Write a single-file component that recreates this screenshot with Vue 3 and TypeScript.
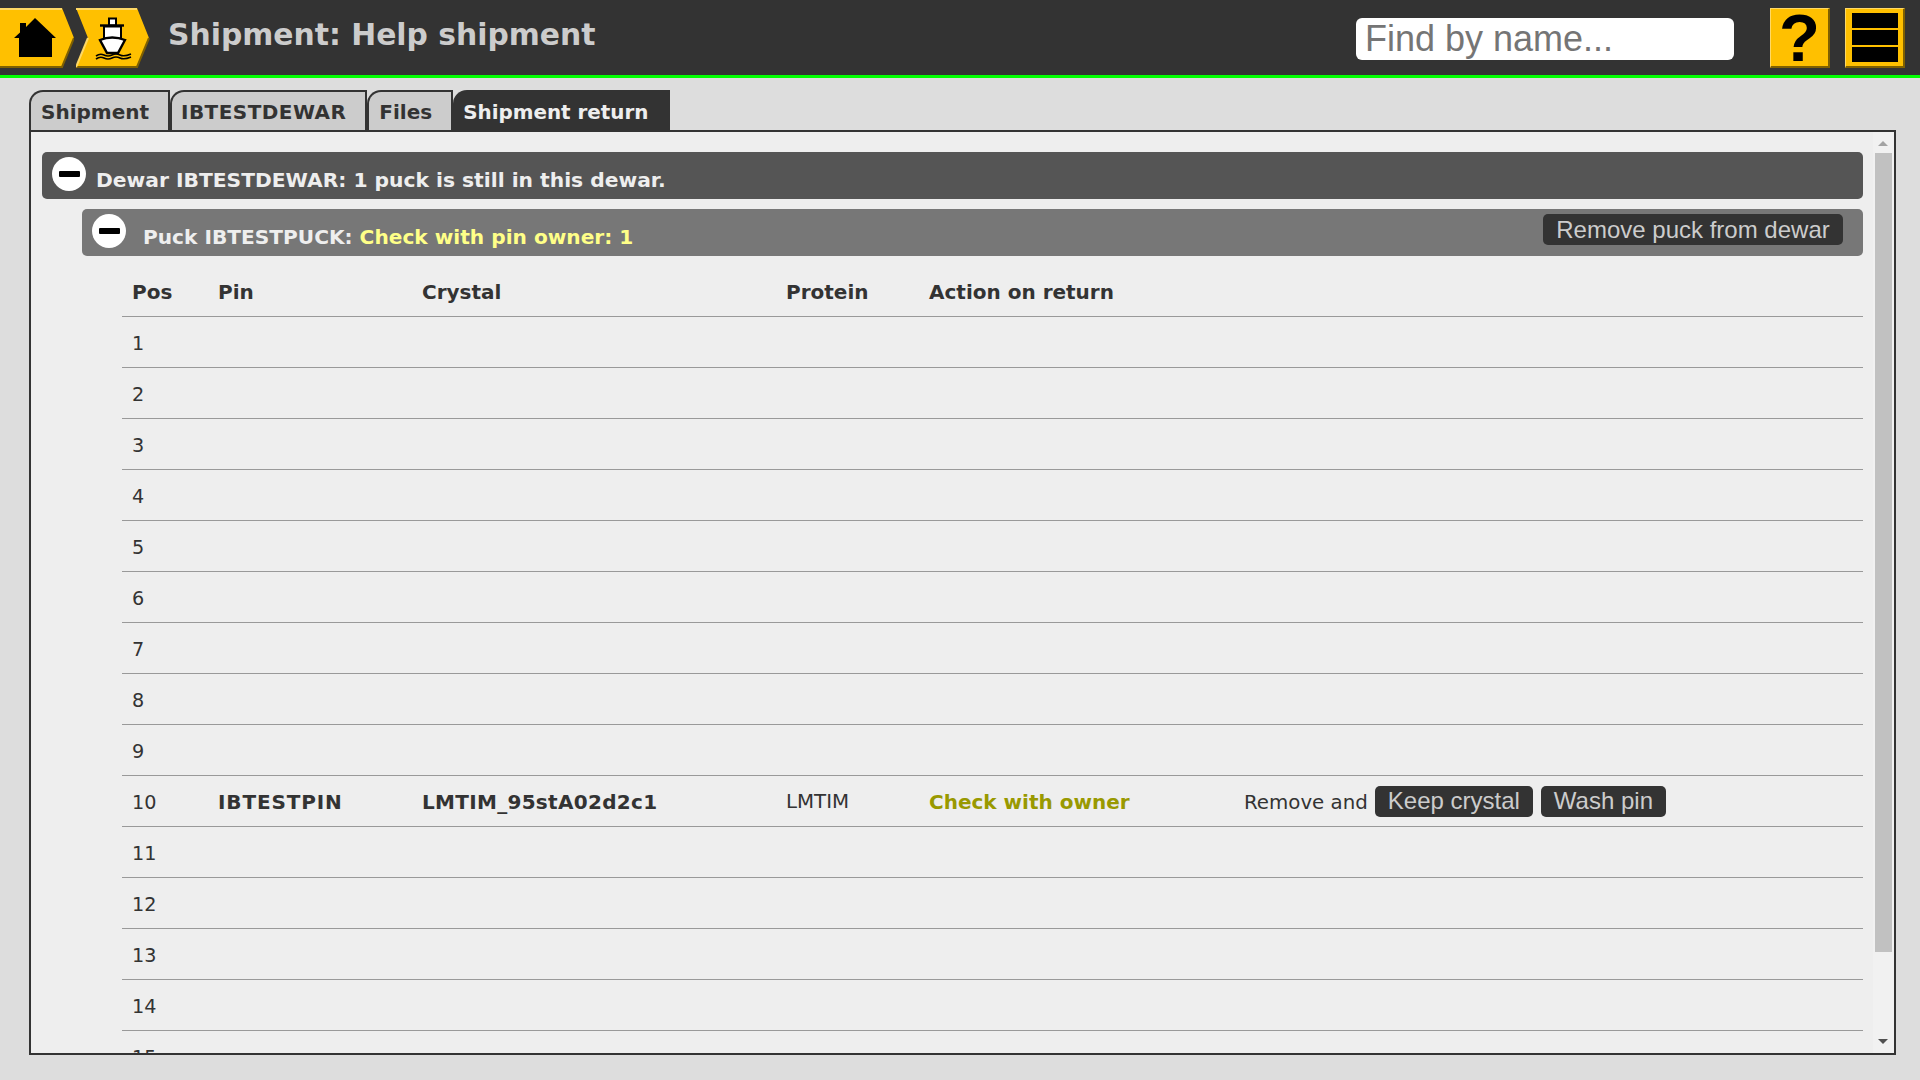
<script setup lang="ts">
const tabs = ['Shipment', 'IBTESTDEWAR', 'Files', 'Shipment return']
const positions: number[] = Array.from({ length: 15 }, (_, i) => i + 1)
</script>

<template>
  <div class="page">
    <header class="topbar">
      <button class="arrow home" aria-label="Home">
        <svg width="74" height="60" viewBox="0 0 74 60">
          <polygon points="0,0 62,0 74,30 62,60 0,60" fill="#ffc000" />
          <polyline points="0,1 62,1" fill="none" stroke="#ffd966" stroke-width="2" />
          <polyline points="0,59 62,59 74,30" fill="none" stroke="#7f6000" stroke-width="2" />
          <path d="M14 30 L20 24.5 V15 H26 V19 L35 10 L56 30 H52 V49 H19 V30 Z" fill="#000" />
        </svg>
      </button>
      <button class="arrow ship" aria-label="Shipments">
        <svg width="74" height="60" viewBox="0 0 74 60">
          <polygon points="0,0 61,0 73,30 61,60 0,60 12,30" fill="#ffc000" />
          <polyline points="0,1 61,1" fill="none" stroke="#ffd966" stroke-width="2" />
          <polyline points="0,59 61,59 73,30" fill="none" stroke="#7f6000" stroke-width="2" />
          <polyline points="0,59 12,30" fill="none" stroke="#ffd966" stroke-width="2" />
          <rect x="33" y="10.5" width="7" height="7" fill="#fff" stroke="#000" stroke-width="2" />
          <path d="M24 17.5 H48" stroke="#000" stroke-width="2.4" />
          <rect x="28" y="18.5" width="17" height="12" fill="#fff" stroke="#000" stroke-width="2" />
          <path d="M24 32 Q36 27 49 32 L42 45 H31 Z" fill="#fff" stroke="#000" stroke-width="2.4" />
          <path d="M20 48 Q24 45 28 47 T36 47 T44 47 T55 46 M20 51 Q24 48 28 50 T36 50 T44 50 T55 49" fill="none" stroke="#000" stroke-width="1.6" />
        </svg>
      </button>
      <h1 class="title">Shipment: Help shipment</h1>
      <input class="search" type="text" placeholder="Find by name..." />
      <button class="square help" aria-label="Help">
        <span class="qmark">?</span>
      </button>
      <button class="square menu" aria-label="Menu">
        <i></i><i></i><i></i>
      </button>
    </header>

    <main class="content">
      <nav class="tabs">
        <span v-for="(t, i) in tabs" :key="t" class="tab" :class="{ active: i === tabs.length - 1 }">{{ t }}</span>
      </nav>
      <section class="panel">
        <div class="scroller">
          <div class="bar dewar">
            <span class="toggle"><i></i></span>
            <span class="bar-text dewar-text">Dewar IBTESTDEWAR: 1 puck is still in this dewar.</span>
          </div>
          <div class="bar puck">
            <span class="toggle"><i></i></span>
            <span class="bar-text puck-text">Puck IBTESTPUCK: <span class="warn">Check with pin owner: 1</span></span>
            <button class="btn remove">Remove puck from dewar</button>
          </div>
          <table class="pins">
            <colgroup>
              <col class="c-pos" />
              <col class="c-pin" />
              <col class="c-crystal" />
              <col class="c-protein" />
              <col class="c-action" />
              <col />
            </colgroup>
            <thead>
              <tr>
                <th>Pos</th><th>Pin</th><th>Crystal</th><th>Protein</th><th>Action on return</th><th></th>
              </tr>
            </thead>
            <tbody>
              <tr v-for="p in positions" :key="p">
                <td class="num">{{ p }}</td>
                <template v-if="p === 10">
                  <td class="strong pin-name">IBTESTPIN</td>
                  <td class="strong crystal-name">LMTIM_95stA02d2c1</td>
                  <td class="wide">LMTIM</td>
                  <td class="owner">Check with owner</td>
                  <td class="actions">
                    <span class="wide">Remove and</span>
                    <button class="btn">Keep crystal</button>
                    <button class="btn">Wash pin</button>
                  </td>
                </template>
                <template v-else>
                  <td></td><td></td><td></td><td></td><td></td>
                </template>
              </tr>
            </tbody>
          </table>
        </div>
        <div class="scrollbar" aria-hidden="true">
          <span class="tri up"></span>
          <span class="thumb"></span>
          <span class="tri down"></span>
        </div>
      </section>
    </main>
  </div>
</template>

<style>
html, body { margin: 0; background: #ddd; }
</style>

<style scoped>
.page {
  width: 1920px;
  height: 1080px;
  overflow: hidden;
  background: #ddd;
  font-family: "DejaVu Sans", Verdana, sans-serif;
  color: #333;
}
.topbar {
  height: 75px;
  border-bottom: 3px solid #0f0;
  background: #333;
  display: flex;
  align-items: center;
  padding: 0 15px 0 0;
}
.arrow, .square {
  border: 0;
  padding: 0;
  background: none;
  display: block;
  height: 60px;
  margin-top: 1px;
}
.arrow svg { display: block; }
.arrow.home { width: 74px; }
.arrow.ship { width: 74px; margin-left: 2px; }
.title {
  margin: 0 0 0 18px;
  font-size: 29.8px;
  font-weight: 700;
  color: #ccc;
  flex: 1;
  position: relative;
  top: -3px;
}
.search {
  width: 378px;
  height: 42px;
  box-sizing: border-box;
  border: 0;
  border-radius: 6px;
  background: #fff;
  padding: 0 9px;
  font-family: "Liberation Sans", Arial, sans-serif;
  font-size: 36px;
  margin-right: 36px;
  outline: none;
  margin-top: 3px;
}
.search::placeholder { color: #757575; opacity: 1; }
.square {
  width: 60px;
  box-sizing: border-box;
  background: #ffc000;
  border-top: 1px solid #ffd966;
  border-left: 1px solid #ffd966;
  border-right: 2px solid #7f6000;
  border-bottom: 2px solid #7f6000;
}
.help {
  margin-right: 15px;
  display: flex;
  align-items: center;
  justify-content: center;
}
.qmark {
  font-family: "Liberation Sans", Arial, sans-serif;
  font-weight: 700;
  font-size: 67px;
  line-height: 60px;
  color: #000;
}
.menu {
  display: flex;
  flex-direction: column;
  gap: 2px;
  padding: 4px 5px 4px 6px;
}
.menu i {
  display: block;
  flex: 1;
  background: #000;
}
.content {
  padding: 12px 24px 0 29px;
}
.tabs {
  display: flex;
  height: 40px;
}
.tab {
  box-sizing: border-box;
  height: 40px;
  padding: 2px 19px 0 9px;
  display: flex;
  align-items: center;
  background: #ccc;
  color: #333;
  font-weight: 700;
  font-size: 20px;
  border: 2px solid #333;
  border-bottom: 0;
  border-top-left-radius: 14px;
}
.tab:nth-child(1) { padding: 2px 19px 0 10px; }
.tab:nth-child(2) { letter-spacing: 0.45px; }
.tab:nth-child(3) { padding: 2px 19px 0 10px; }
.tab.active {
  background: #333;
  color: #eee;
  font-size: 19.9px;
  padding: 2px 20px 0 8px;
}
.panel {
  box-sizing: border-box;
  height: 925px;
  border: 2px solid #333;
  background: #eee;
  display: flex;
}
.scroller {
  flex: 1;
  min-width: 0;
  overflow: hidden;
  padding: 20px 10px 0 11px;
}
.bar {
  height: 47px;
  border-radius: 5px;
  display: flex;
  align-items: center;
  position: relative;
}
.dewar { background: #555; }
.puck { background: #777; margin: 10px 0 0 40px; }
.toggle {
  width: 34px;
  height: 34px;
  margin-left: 10px;
  border-radius: 50%;
  background: #fff;
  display: flex;
  align-items: center;
  justify-content: center;
  align-self: flex-start;
  margin-top: 5px;
}
.toggle i {
  display: block;
  width: 21px;
  height: 6px;
  background: #000;
  border-radius: 1px;
}
.bar-text {
  font-weight: 700;
  font-size: 20.25px;
  color: #eee;
  margin-top: 8px;
}
.dewar-text { margin-left: 10px; }
.puck-text { margin-left: 17px; font-size: 20.15px; }
.warn { color: #ff8; }
.btn {
  border: 0;
  border-radius: 5px;
  background: #333;
  color: #ccc;
  font-family: "Liberation Sans", Arial, sans-serif;
  font-size: 24px;
  height: 31px;
  line-height: 29px;
  padding: 0 0 2px;
  width: auto;
}
.actions .btn { padding: 0 13px 2px; }
.remove {
  margin-left: auto;
  margin-right: 20px;
  width: 300px;
  align-self: flex-start;
  margin-top: 5px;
  padding: 0;
}
.pins {
  width: 1741px;
  margin: 10px 0 0 80px;
  table-layout: fixed;
  border-collapse: separate;
  border-spacing: 0;
  font-size: 19.2px;
}
.c-pos { width: 86px; }
.c-pin { width: 204px; }
.c-crystal { width: 364px; }
.c-protein { width: 143px; }
.c-action { width: 315px; }
.pins th, .pins td {
  height: 49px;
  padding: 1px 10px 0;
  box-sizing: content-box;
  text-align: left;
  border-bottom: 1px solid #999;
  white-space: nowrap;
}
.pins td.num { height: 48px; padding-top: 2px; }
.pins th { font-weight: 700; font-size: 20px; }
.strong { font-weight: 700; font-size: 20px; }
.pin-name { letter-spacing: 0.85px; }
.crystal-name { letter-spacing: 0.3px; }
.wide { font-size: 19.8px; }
.owner { font-weight: 700; font-size: 20px; color: #990; }
.actions > span { margin-right: 7px; }
.actions .btn { margin-right: 8px; vertical-align: 0; }
.scrollbar {
  width: 21px;
  flex: none;
  background: #f1f1f1;
  position: relative;
  display: flex;
  flex-direction: column;
  align-items: flex-end;
}
.thumb {
  display: block;
  width: 17px;
  height: 799px;
  margin: 21px 2px 0 0;
  background: #c1c1c1;
}
.tri {
  position: absolute;
  width: 0;
  height: 0;
  right: 6px;
  border-left: 5px solid transparent;
  border-right: 5px solid transparent;
}
.tri.up { top: 9px; border-bottom: 5px solid #a3a3a3; }
.tri.down { bottom: 9px; border-top: 5px solid #505050; }
</style>
